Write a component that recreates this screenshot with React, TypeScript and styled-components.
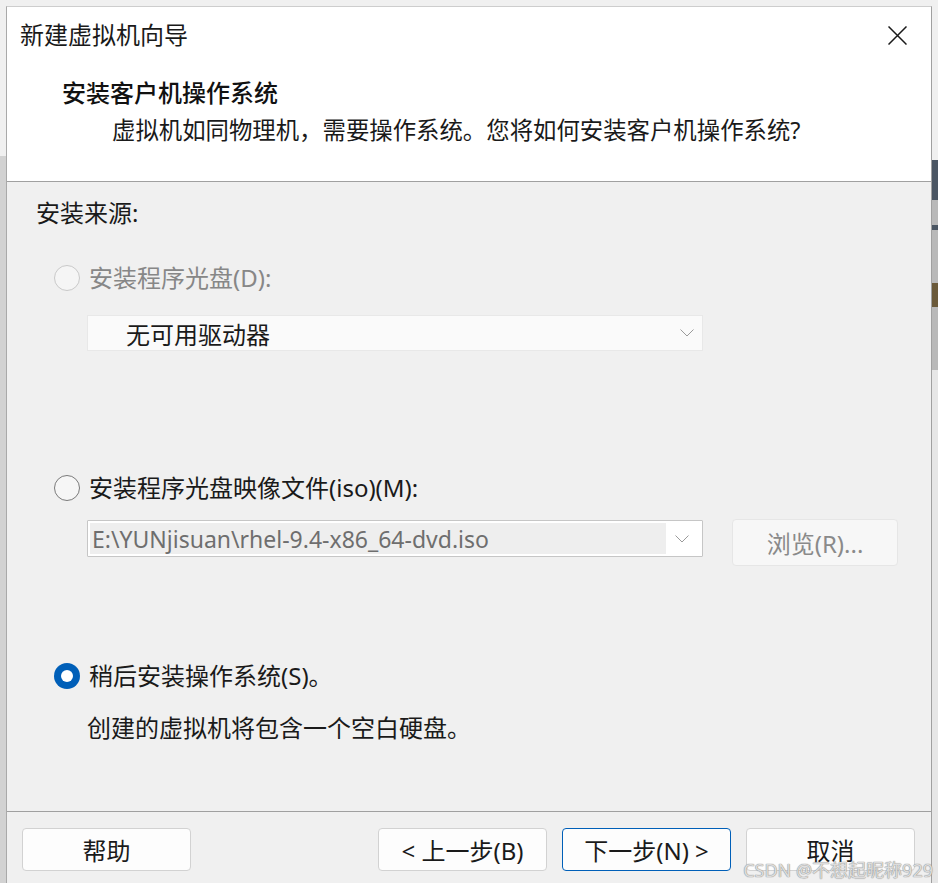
import React from "react";
import styled, { createGlobalStyle } from "styled-components";

const Global = createGlobalStyle`
  html, body { margin: 0; padding: 0; background: #f0f0f0; overflow: hidden; }
  body { font-family: "Noto Sans", "Noto Sans CJK SC", sans-serif; color: #1a1a1a; }
  * { box-sizing: border-box; }
`;

const Screen = styled.div`
  display: flex;
  width: 938px;
  height: 883px;
  overflow: hidden;
`;

const Gutter = styled.div<{ $w?: number }>`
  flex: ${(p) => (p.$w ? `0 0 ${p.$w}px` : "1 1 auto")};
  display: flex;
  flex-direction: column;
  background: linear-gradient(#f0f0f0 0 156px, #d2d2d2 156px);
`;

const RightStrip = styled.div`
  display: flex;
  flex-direction: column;
  height: 100%;
`;

const StripBlock = styled.div<{ $h: number; $bg: string }>`
  height: ${(p) => p.$h}px;
  background: ${(p) => p.$bg};
`;

const Window = styled.div`
  flex: 0 0 926px;
  margin-top: 6px;
  display: flex;
  flex-direction: column;
  border-top: 1px solid #cdcdcd;
  border-left: 1px solid #a9a9a9;
  border-right: 1px solid #a0a0a0;
  background: #f0f0f0;
`;

const Header = styled.div`
  height: 175px;
  background: #ffffff;
  border-bottom: 1px solid #a0a0a0;
  display: flex;
  flex-direction: column;
`;

const TitleBar = styled.div`
  display: flex;
  align-items: center;
  justify-content: space-between;
  padding: 11px 24px 0 13px;
  height: 45px;
`;

const Title = styled.div`
  font-size: 24px;
  line-height: 34px;
  color: #1a1a1a;
`;

const CloseButton = styled.div`
  width: 19px;
  height: 19px;
  display: flex;
`;

const Heading = styled.div`
  margin-top: 24px;
  padding-left: 55px;
  font-size: 24px;
  line-height: 34px;
  font-weight: 500;
  color: #111;
`;

const Subtitle = styled.div`
  margin-top: 3px;
  padding-left: 105px;
  font-size: 23.4px;
  line-height: 34px;
  color: #1a1a1a;
`;

const Body = styled.div`
  height: 630px;
  padding: 14px 0 0 0;
  display: flex;
  flex-direction: column;
  border-bottom: 1px solid #a0a0a0;
`;

const Section = styled.div`
  padding-left: 29px;
  font-size: 24px;
  line-height: 34px;
`;

const RadioRow = styled.div<{ $mt: number; $disabled?: boolean }>`
  margin-top: ${(p) => p.$mt}px;
  padding-left: 47px;
  display: flex;
  align-items: center;
  gap: 9px;
  height: 34px;
  font-size: 24px;
  line-height: 34px;
  color: ${(p) => (p.$disabled ? "#878787" : "#1a1a1a")};
`;

const RadioCircle = styled.span<{ $state: "disabled" | "off" | "on" }>`
  width: 26px;
  height: 26px;
  border-radius: 50%;
  flex: 0 0 26px;
  display: flex;
  align-items: center;
  justify-content: center;
  background: ${(p) => (p.$state === "on" ? "#005fb8" : p.$state === "disabled" ? "#f5f5f5" : "#f6f6f6")};
  border: ${(p) =>
    p.$state === "on" ? "none" : p.$state === "disabled" ? "1.5px solid #c9c9c9" : "1.5px solid #7a7a7a"};
  &::after {
    content: "";
    display: ${(p) => (p.$state === "on" ? "block" : "none")};
    width: 12px;
    height: 12px;
    border-radius: 50%;
    background: #ffffff;
  }
`;

const Indented = styled.div<{ $mt: number }>`
  margin-top: ${(p) => p.$mt}px;
  padding-left: 80px;
  display: flex;
  align-items: flex-start;
  gap: 29px;
`;

const DropDown = styled.div`
  width: 616px;
  height: 36px;
  background: #fafafa;
  border: 1px solid #e8e8e8;
  display: flex;
  align-items: center;
  justify-content: space-between;
  padding: 0 8px 0 38px;
  font-size: 24px;
  color: #1a1a1a;
`;

const Combo = styled.div`
  margin-top: 1px;
  width: 616px;
  height: 37px;
  background: #ffffff;
  border: 1px solid #c6c6c6;
  border-radius: 1px;
  display: flex;
  padding: 2px;
`;

const ComboField = styled.div`
  flex: 1;
  background: #eeeeee;
  display: flex;
  align-items: center;
  padding-left: 2px;
  font-size: 23px;
  color: #6e6e6e;
  white-space: nowrap;
  overflow: hidden;
`;

const ComboArrow = styled.div`
  flex: 0 0 34px;
  display: flex;
  align-items: center;
  justify-content: center;
  padding-right: 2px;
`;

const BrowseButton = styled.div`
  width: 166px;
  height: 47px;
  background: #f7f7f7;
  border: 1px solid #e6e6e6;
  border-radius: 4px;
  display: flex;
  align-items: center;
  justify-content: center;
  font-size: 24px;
  color: #8a8a8a;
`;

const Description = styled.div<{ $mt: number }>`
  margin-top: ${(p) => p.$mt}px;
  padding-left: 80px;
  font-size: 24px;
  line-height: 34px;
`;

const Footer = styled.div`
  position: relative;
  flex: 1;
  display: flex;
  justify-content: space-between;
  padding: 16px 16px 0 15px;
`;

const ButtonGroup = styled.div`
  display: flex;
  gap: 15px;
`;

const Button = styled.div<{ $primary?: boolean }>`
  width: 169px;
  height: 43px;
  background: #fdfdfd;
  border: 1px solid ${(p) => (p.$primary ? "#005fb8" : "#d2d2d2")};
  border-radius: 4px;
  display: flex;
  align-items: center;
  justify-content: center;
  font-size: 24px;
  color: #1a1a1a;
  white-space: pre;
`;

const Watermark = styled.div`
  position: absolute;
  right: -2px;
  bottom: 2px;
  font-family: "Noto Sans", "Noto Sans CJK SC", sans-serif;
  font-size: 18px;
  line-height: 22px;
  color: rgba(235, 235, 235, 0.85);
  text-shadow: 0 0 1px #8a8a8a, 0 0 1px #8a8a8a;
  white-space: nowrap;
`;

const Chevron = () => (
  <svg width="14" height="8" viewBox="0 0 14 8">
    <path d="M0.5 0.5 L7 7 L13.5 0.5" fill="none" stroke="#9a9a9a" strokeWidth="1" />
  </svg>
);

const CloseIcon = () => (
  <svg width="19" height="19" viewBox="0 0 19 19">
    <path d="M0.5 0.5 L18.5 18.5 M18.5 0.5 L0.5 18.5" stroke="#1a1a1a" strokeWidth="1.5" />
  </svg>
);

export default function App() {
  return (
    <>
      <Global />
      <Screen>
        <Gutter $w={6} />
        <Window>
          <Header>
            <TitleBar>
              <Title>新建虚拟机向导</Title>
              <CloseButton>
                <CloseIcon />
              </CloseButton>
            </TitleBar>
            <Heading>安装客户机操作系统</Heading>
            <Subtitle>虚拟机如同物理机，需要操作系统。您将如何安装客户机操作系统?</Subtitle>
          </Header>
          <Body>
            <Section>安装来源:</Section>
            <RadioRow $mt={31} $disabled>
              <RadioCircle $state="disabled" />
              <span>安装程序光盘(D):</span>
            </RadioRow>
            <Indented $mt={20}>
              <DropDown>
                <span>无可用驱动器</span>
                <Chevron />
              </DropDown>
            </Indented>
            <RadioRow $mt={120}>
              <RadioCircle $state="off" />
              <span>安装程序光盘映像文件(iso)(M):</span>
            </RadioRow>
            <Indented $mt={14}>
              <Combo>
                <ComboField>E:\YUNjisuan\rhel-9.4-x86_64-dvd.iso</ComboField>
                <ComboArrow>
                  <Chevron />
                </ComboArrow>
              </Combo>
              <BrowseButton>浏览(R)...</BrowseButton>
            </Indented>
            <RadioRow $mt={93}>
              <RadioCircle $state="on" />
              <span>稍后安装操作系统(S)。</span>
            </RadioRow>
            <Description $mt={18}>创建的虚拟机将包含一个空白硬盘。</Description>
          </Body>
          <Footer>
            <Button>帮助</Button>
            <ButtonGroup>
              <Button>{"< 上一步(B)"}</Button>
              <Button $primary>{"下一步(N) >"}</Button>
              <Button>取消</Button>
            </ButtonGroup>
            <Watermark>CSDN @不想起昵称929</Watermark>
          </Footer>
        </Window>
        <Gutter>
          <RightStrip>
            <StripBlock $h={160} $bg="#f0f0f0" />
            <StripBlock $h={40} $bg="#4b5663" />
            <StripBlock $h={25} $bg="#b9b9b9" />
            <StripBlock $h={5} $bg="#4b5663" />
            <StripBlock $h={53} $bg="#b9b9b9" />
            <StripBlock $h={24} $bg="#6b5a3a" />
            <StripBlock $h={63} $bg="#b9b9b9" />
            <StripBlock $h={513} $bg="#e6e6e6" />
          </RightStrip>
        </Gutter>
      </Screen>
    </>
  );
}
